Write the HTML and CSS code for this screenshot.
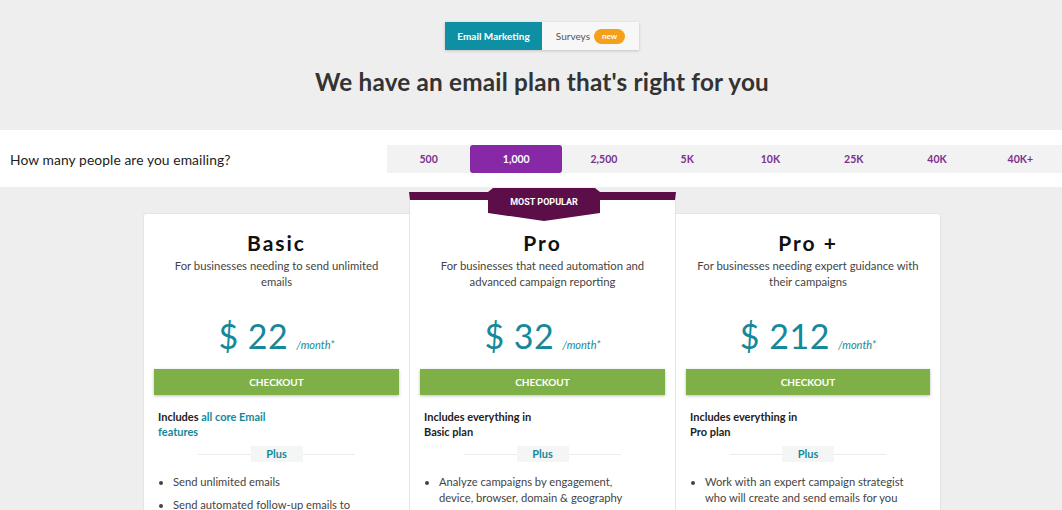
FILE: index.html
```html
<!DOCTYPE html>
<html>
<head>
<meta charset="utf-8">
<link rel="stylesheet" href="styles.css">
</head>
<body>
<div class="top">
  <div class="toggle">
    <div class="tab active">Email Marketing</div>
    <div class="tab">Surveys <span class="new">new</span></div>
  </div>
  <h1 class="heading">We have an email plan that's right for you</h1>
</div>
<div class="band">
  <div class="question">How many people are you emailing?</div>
  <div class="seg">
    <div class="opt">500</div>
    <div class="opt on">1,000</div>
    <div class="opt">2,500</div>
    <div class="opt">5K</div>
    <div class="opt">10K</div>
    <div class="opt">25K</div>
    <div class="opt">40K</div>
    <div class="opt">40K+</div>
  </div>
</div>
<div class="cards">
  <div class="card side first">
    <div class="title">Basic</div>
    <div class="desc">For businesses needing to send unlimited<br>emails</div>
    <div class="price"><span class="amt">$ 22</span><span class="per">/month*</span></div>
    <div class="btn">CHECKOUT</div>
    <div class="inc">Includes <span class="link">all core Email<br>features</span></div>
    <div class="plus"><span>Plus</span></div>
    <ul class="list">
      <li>Send unlimited emails</li>
      <li>Send automated follow-up emails to contacts who open or click</li>
    </ul>
  </div>
  <div class="card pro">
    <div class="badge">MOST POPULAR</div>
    <div class="title">Pro</div>
    <div class="desc">For businesses that need automation and<br>advanced campaign reporting</div>
    <div class="price"><span class="amt">$ 32</span><span class="per">/month*</span></div>
    <div class="btn">CHECKOUT</div>
    <div class="inc">Includes everything in<br>Basic plan</div>
    <div class="plus"><span>Plus</span></div>
    <ul class="list">
      <li>Analyze campaigns by engagement, device, browser, domain &amp; geography</li>
    </ul>
  </div>
  <div class="card side last">
    <div class="title">Pro +</div>
    <div class="desc">For businesses needing expert guidance with<br>their campaigns</div>
    <div class="price"><span class="amt">$ 212</span><span class="per">/month*</span></div>
    <div class="btn">CHECKOUT</div>
    <div class="inc">Includes everything in<br>Pro plan</div>
    <div class="plus"><span>Plus</span></div>
    <ul class="list">
      <li>Work with an expert campaign strategist who will create and send emails for you</li>
    </ul>
  </div>
</div>
</body>
</html>
```
FILE: styles.css
```css
* { box-sizing: border-box; }
html, body { margin: 0; padding: 0; }
body {
  background: #eeeeee;
  font-family: Lato, "Open Sans", sans-serif;
  color: #333;
  overflow: hidden;
  height: 510px;
}
.top {
  padding: 22px 0 0 22px;
  display: flex;
  flex-direction: column;
  align-items: center;
  height: 130px;
}
.toggle {
  display: flex;
  height: 28px;
  box-shadow: 0 1px 3px rgba(0,0,0,0.18);
}
.tab {
  width: 97px;
  display: flex;
  align-items: center;
  justify-content: center;
  font-size: 10px;
  color: #555;
  background: #f7f7f7;
}
.tab.active {
  background: #0f8fa4;
  color: #fff;
  font-weight: 700;
}
.new {
  display: inline-block;
  margin-left: 4px;
  background: #f5a01a;
  color: #fff;
  font-size: 8px;
  font-weight: 700;
  line-height: 15px;
  padding: 0 8px;
  border-radius: 8px;
}
.heading {
  margin: 16px 0 0;
  font-size: 24.3px;
  font-weight: 700;
  color: #333;
  line-height: 32px;
  letter-spacing: 0.2px;
}
.band {
  background: #fff;
  height: 57px;
  display: flex;
  align-items: center;
  padding-left: 10px;
}
.question {
  font-size: 13.8px;
  color: #222;
  width: 377px;
  padding-top: 1px;
  letter-spacing: 0.1px;
}
.seg {
  flex: 1;
  display: flex;
  height: 28px;
  background: #f3f2f2;
}
.opt {
  flex: 1;
  display: flex;
  align-items: center;
  justify-content: center;
  font-size: 10.5px;
  font-weight: 700;
  color: #7b3190;
}
.opt.on {
  flex: 0 0 92px;
  background: #8728a7;
  color: #fff;
  border-radius: 3px;
}
.cards {
  display: grid;
  grid-template-columns: 266px 267px 265px;
  justify-content: center;
  align-items: start;
  padding: 5px 0 0 22px;
}
.card {
  background: #fff;
  border: 1px solid #e4e4e4;
  padding: 17px 10px 0;
  height: 330px;
  display: flex;
  flex-direction: column;
  position: relative;
}
.card.side { margin-top: 21px; }
.card.first { border-right: none; border-radius: 3px 0 0 0; }
.card.last { border-left: none; border-radius: 0 3px 0 0; }
.card.pro {
  border-top: 8px solid #5b0e47;
  padding-top: 31px;
  height: 351px;
}
.badge {
  position: absolute;
  top: -12px;
  left: 78px;
  width: 112px;
  height: 33px;
  background: #5b0e47;
  clip-path: polygon(5px 0, 107px 0, 112px 4px, 112px 25px, 56px 33px, 0 25px, 0 4px);
  color: #fff;
  font-family: Roboto, sans-serif;
  font-weight: 700;
  font-size: 9px;
  text-align: center;
  padding-top: 9px;
}
.title {
  text-align: center;
  font-size: 21px;
  font-weight: 700;
  letter-spacing: 2px;
  color: #111;
  line-height: 24px;
}
.desc {
  text-align: center;
  font-size: 11.3px;
  color: #444;
  line-height: 16px;
  margin-top: 3px;
}
.price {
  text-align: center;
  margin-top: 26px;
  color: #15899a;
  line-height: 40px;
  height: 40px;
}
.amt { font-size: 34px; letter-spacing: 0.5px; }
.per {
  font-size: 11px;
  font-style: italic;
  margin-left: 8px;
}
.btn {
  margin-top: 13px;
  height: 26px;
  background: #7fb048;
  color: #fff;
  font-size: 10px;
  font-weight: 700;
  display: flex;
  align-items: center;
  justify-content: center;
  box-shadow: 0 1px 3px rgba(0,0,0,0.25);
}
.inc {
  margin-top: 14px;
  padding-left: 4px;
  font-size: 11px;
  font-weight: 700;
  color: #222;
  line-height: 15px;
}
.link { color: #15899a; }
.plus {
  margin: 7px 44px 0;
  height: 16px;
  display: flex;
  align-items: center;
  justify-content: center;
  background: linear-gradient(#ececec, #ececec) center / 100% 1px no-repeat;
}
.plus span {
  background: #f4f6f6;
  color: #15899a;
  font-size: 11px;
  font-weight: 700;
  width: 52px;
  line-height: 16px;
  text-align: center;
}
.list {
  margin: 12px 0 0;
  padding: 0 16px 0 19px;
  font-size: 11.2px;
  color: #444;
  line-height: 16px;
}
.list li { margin-bottom: 7px; }
```
